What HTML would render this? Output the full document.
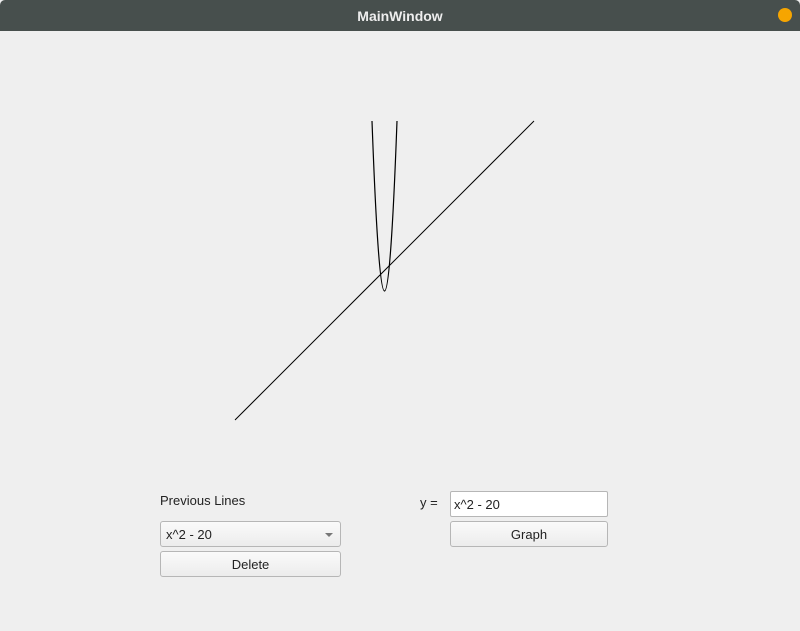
<!DOCTYPE html>
<html><head><style>
body{margin:0;width:800px;height:631px;background:#efefef;font-family:"Liberation Sans",sans-serif;position:relative;overflow:hidden}
.tb{position:absolute;left:0;top:0;width:800px;height:31px;background:#474f4d;border-radius:5px 5px 0 0;color:#eee;font-weight:bold;font-size:14px;text-align:center;line-height:32px}
.dot{position:absolute;right:8px;top:8px;width:14px;height:14px;border-radius:50%;background:#f6a500}
.lbl{position:absolute;font-size:13px;color:#222}
.btn{position:absolute;height:24px;border:1px solid #b6b6b6;border-radius:3px;background:linear-gradient(#fafafa,#ececec);font-size:13px;text-align:center;line-height:24px;color:#222;box-sizing:border-box}
.inp{position:absolute;height:26px;border:1px solid #b6b6b6;border-radius:2px;background:#fff;font-size:13px;line-height:25px;padding-left:3px;box-sizing:border-box;color:#222}
</style></head><body>
<div class="tb">MainWindow<div class="dot"></div></div>
<svg style="position:absolute;left:0;top:0" width="800" height="631">
<line x1="235" y1="420" x2="534" y2="121" stroke="#000" stroke-width="1"/>
<path d="M372 121 Q384.5 461 397 121" fill="none" stroke="#000" stroke-width="1.2"/>
</svg>
<div class="lbl" style="left:160px;top:493px">Previous Lines</div>
<div class="btn" style="left:160px;top:521px;width:181px;height:26px;text-align:left;padding-left:5px;line-height:25px">x^2 - 20<span style="position:absolute;right:7px;top:11px;border-left:4px solid transparent;border-right:4px solid transparent;border-top:4px solid #777"></span></div>
<div class="btn" style="left:160px;top:551px;width:181px;height:26px;line-height:25px">Delete</div>
<div class="lbl" style="left:420px;top:495px">y =</div>
<div class="inp" style="left:450px;top:491px;width:158px">x^2 - 20</div>
<div class="btn" style="left:450px;top:521px;width:158px;height:26px;line-height:25px">Graph</div>
</body></html>
